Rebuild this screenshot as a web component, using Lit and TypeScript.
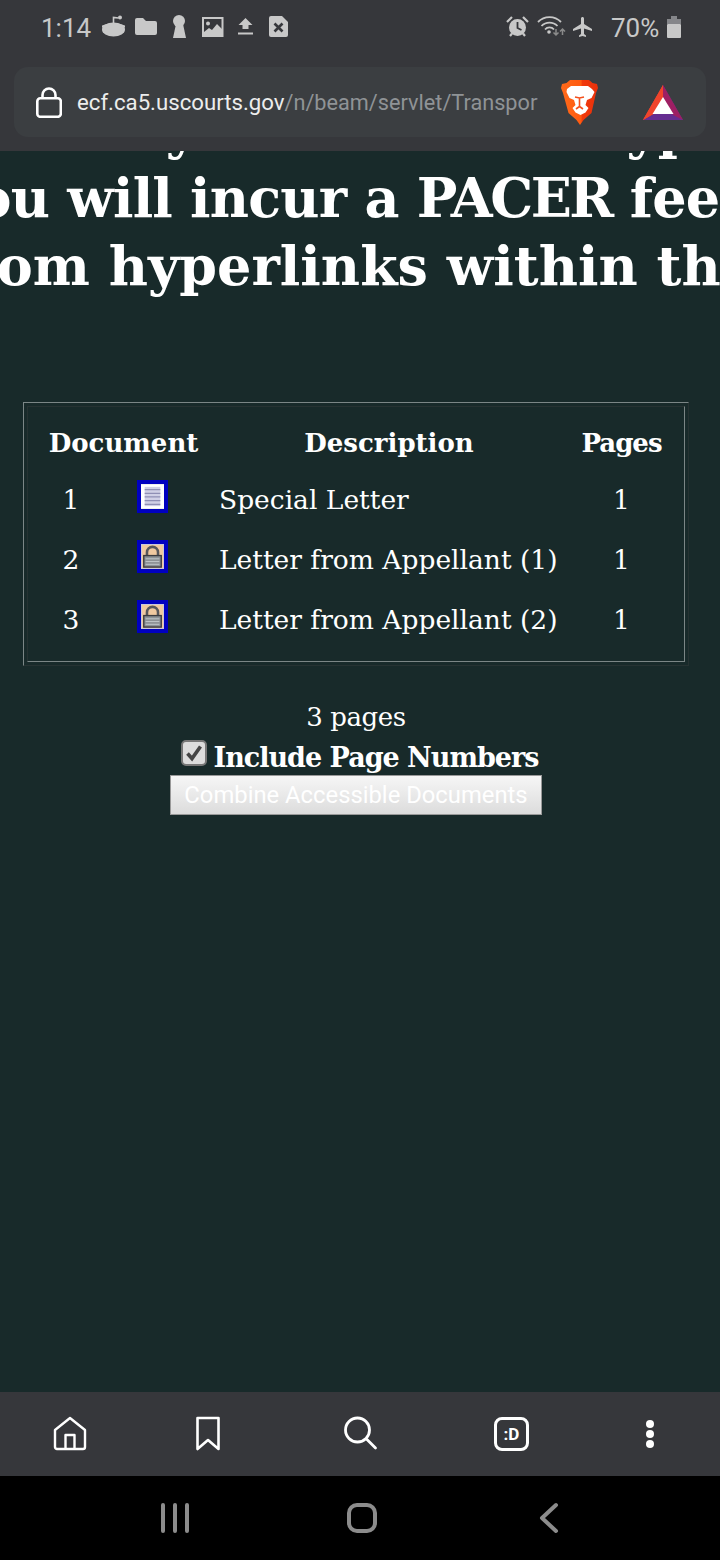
import { LitElement, html, css, svg } from 'lit';
import { customElement } from 'lit/decorators.js';

const rows = [
  { n: 1, title: 'Special Letter', locked: false },
  { n: 2, title: 'Letter from Appellant (1)', locked: true },
  { n: 3, title: 'Letter from Appellant (2)', locked: true },
];

const docIcon = svg`
  <rect width="25" height="27" fill="#fff"/>
  <rect x="4" y="3" width="17" height="21" fill="#d0d0e6"/>
  <path d="M4 6h17M4 10h17M4 14h17M4 18h17M4 22h17" stroke="#8f8fb5" stroke-width="1.300"/>`;

const lockIcon = svg`
  <rect width="25" height="27" fill="#f0c9a0"/>
  <rect width="25" height="27" fill="none" stroke="#c8c8dc" stroke-width="2"/>
  <path d="M6.500 14V9a6 6 0 0 1 12 0v5" fill="none" stroke="#57575b" stroke-width="2.800"/>
  <rect x="3" y="12.500" width="19" height="12.500" fill="#8d9296" stroke="#3c3c40" stroke-width="1.500"/>
  <path d="M5 16h15M5 19h15M5 22h15" stroke="#c4cbcd" stroke-width="1"/>`;

@customElement('app-root')
export class AppRoot extends LitElement {
  static styles = css`
    :host {
      display: flex;
      flex-direction: column;
      width: 720px;
      height: 1560px;
      overflow: hidden;
      background: #182a2a;
      font-family: 'DejaVu Serif', serif;
      color: #fff;
    }
    svg { display: block; flex: none; }

    .top { height: 151px; flex: none; background: #36373b; box-sizing: border-box; padding: 0 14px; }
    .status { height: 67px; display: flex; align-items: flex-start; font-family: Roboto, sans-serif; color: #c8c8c8; font-size: 26px; }
    .status svg { margin-top: 10px; }
    .time { width: 57px; margin-left: 27px; line-height: 56px; }
    .status-right { margin-left: 213px; }
    .pct { margin-left: 16px; line-height: 56px; width: 55px; }
    .urlbar { height: 70px; background: #3b3e41; border-radius: 14px; display: flex; align-items: center; padding-left: 22px; }
    .url { width: 461px; margin-left: 15px; overflow: hidden; white-space: nowrap; font: 21.700px Roboto, sans-serif; color: #8f9396; }
    .url b { font-weight: 400; font-size: 22.200px; color: #eceded; }
    .brave { margin-left: 23px; }
    .bat { margin-left: 45px; }

    main { flex: 1; min-height: 0; overflow: hidden; }
    .headline { font-weight: 700; font-size: 54px; line-height: 68px; white-space: nowrap; height: 243px; margin-top: -56px; }
    .l1 { margin-left: -232px; margin-bottom: 2px; }
    .l2 { margin-left: -55px; letter-spacing: -0.8px; line-height: 67px; }
    .l2 span { letter-spacing: -2.500px; }
    .l3 { margin-left: -55px; }

    .doc-box {
      width: 666px;
      height: 264px;
      box-sizing: border-box;
      margin: 64px 0 0 23px;
      border: 1px solid;
      border-color: #7b8686 #263232 #263232 #7b8686;
      padding: 3px;
    }
    .doc-inner { height: 100%; box-sizing: border-box; border: 1px solid; border-color: #263232 #7b8686 #7b8686 #263232; }
    table { border-collapse: collapse; width: 656px; table-layout: fixed; font-size: 26.500px; }
    col.c1 { width: 86px; }
    col.c2 { width: 105px; }
    col.c3 { width: 340px; }
    col.c4 { width: 125px; }
    th, td { padding: 0; text-align: center; height: 60px; font-weight: 400; }
    th { font-weight: 700; height: 52px; font-size: 26px; padding-top: 10px; }
    th:last-child { letter-spacing: -1px; }
    td.title { text-align: left; }
    .icon { display: block; width: 23px; height: 25px; border: 4px solid #0000c0; margin: 0 0 6px 23px; }

    .summary { width: 712px; display: flex; flex-direction: column; align-items: center; margin-top: 31px; }
    .pages { font-size: 26px; line-height: 40px; letter-spacing: -0.4px; }
    .include { display: flex; align-items: center; gap: 7px; margin-left: 7px; padding: 5px 0 1px; font-size: 27px; font-weight: 700; line-height: 32px; letter-spacing: -1px; }
    .check { width: 26px; height: 26px; box-sizing: border-box; background: #dcdcdc; border: 2px solid #777; border-radius: 5px; margin-top: -10px; }
    .combine {
      width: 372px;
      height: 40px;
      padding: 0;
      box-sizing: border-box;
      border: 1px solid #999;
      background: linear-gradient(#f6f6f6, #dcdcdc);
      color: #fff;
      font: 23.800px Roboto, sans-serif;
      white-space: nowrap;
    }

    .toolbar { height: 84px; flex: none; background: #36373b; display: flex; align-items: center; padding-left: 52px; gap: 102px; }
    .find { margin: 0 14px; }
    .more { margin-left: 1px; }
    .tab { width: 35px; height: 34px; box-sizing: border-box; border: 3px solid #fff; border-radius: 8px; display: flex; align-items: center; justify-content: center; font: 700 17px Roboto, sans-serif; }
    .nav { height: 84px; flex: none; background: #000; display: flex; align-items: center; padding-left: 159px; gap: 155px; }
  `;

  private statusLeft() {
    return html`<svg width="194" height="36" viewBox="98 10 194 36" fill="#c8c8c8">
      <ellipse cx="113.500" cy="29.500" rx="11.500" ry="7"/>
      <path d="M102 25.500q11.500-5 23 0v2h-23z" fill="#c8c8c8"/>
      <path d="M113.500 24v-6.500l5 .5" fill="none" stroke="#c8c8c8" stroke-width="1.600"/>
      <circle cx="120" cy="17.500" r="2"/>
      <path d="M135 20a2 2 0 0 1 2-2h6l3 3h9a2 2 0 0 1 2 2v10a2 2 0 0 1-2 2h-18a2 2 0 0 1-2-2z"/>
      <circle cx="179" cy="21" r="6"/>
      <path d="M176 24 173 38h13l-3-14z"/>
      <rect x="203" y="18" width="19.500" height="18" fill="none" stroke="#c8c8c8" stroke-width="2"/>
      <circle cx="208" cy="23.500" r="2"/>
      <path d="M204 35v-3l5-4 3 2 5-6 5 5v6z"/>
      <path d="M245.500 18l7 7h-4v4h-6v-4h-4z"/>
      <rect x="238" y="32.500" width="15" height="2"/>
      <path d="M271 16h11l6 6v13a2 2 0 0 1-2 2h-15a2 2 0 0 1-2-2V18a2 2 0 0 1 2-2z"/>
      <path d="M274.500 23.500l8 8M282.500 23.500l-8 8" stroke="#36373b" stroke-width="2.600"/>
    </svg>`;
  }

  private statusRight() {
    return html`<svg class="status-right" width="90" height="36" viewBox="505 10 90 36" fill="#c8c8c8">
      <circle cx="517.500" cy="27.500" r="8.500"/>
      <path d="M517.500 22v6l4 2" fill="none" stroke="#36373b" stroke-width="1.800"/>
      <path d="M507 22l5-5M523 17l5 5M510 36l2-2.500M525 36l-2-2.500" stroke="#c8c8c8" stroke-width="2.200" fill="none"/>
      <g fill="none" stroke="#c8c8c8" stroke-width="1.800">
        <path d="M538 22a16 16 0 0 1 23 0"/>
        <path d="M541.500 26a11 11 0 0 1 16 0"/>
        <path d="M545 29.500a6 6 0 0 1 9 0"/>
      </g>
      <circle cx="549" cy="32" r="1.800"/>
      <path d="M556 29v6m-2.500-2.500 2.500 2.500 2.500-2.500M562.500 35v-6m-2.500 2.500 2.500-2.500 2.500 2.500" fill="none" stroke="#8a8a8a" stroke-width="1.500"/>
      <svg x="571" y="14.500" width="24" height="25" viewBox="0 0 24 24"><path d="M21 16v-2l-8-5V3.500c0-.83-.67-1.500-1.500-1.500S10 2.670 10 3.500V9l-8 5v2l8-2.500V19l-2 1.500V22l3.500-1 3.500 1v-1.500L13 19v-5.500l8 2.500z"/></svg>
    </svg>`;
  }

  private brave() {
    return html`<svg class="brave" width="37" height="46" viewBox="0 0 37 46">
      <defs><linearGradient id="bg" x1="0" x2="1"><stop offset="0" stop-color="#ff6a1a"/><stop offset=".55" stop-color="#ff5a10"/><stop offset=".56" stop-color="#f23a0c"/><stop offset="1" stop-color="#e8300a"/></linearGradient></defs>
      <path d="M9 1h19l3.500 3 4.500 1 1 4-2 5-4.500 20-8 7-3.500 5-3.500-5-8-7L2 14 0 9l1-4 4.500-1z" fill="url(#bg)"/>
      <path d="M10 7h17l4 3 2.500 3-3 6-4.500 2-1.500 5 3 3-3 4.500-5 2.500-5-2.500-3-4.500 3-3-1.500-5-4.500-2-3-6L6 10z" fill="#fff"/>
      <path d="M14 18l4.500 1 4.500-1M18.500 19v8.500l-3.500 2.500M18.500 27.500l3.500 2.500" fill="none" stroke="#f4511e" stroke-width="1.600"/>
    </svg>`;
  }

  private bat() {
    return html`<svg class="bat" width="40" height="35" viewBox="0 0 40 35">
      <path d="M20 0 0 35h40z" fill="#662d91"/>
      <path d="M20 0 0 35l9.500-5.500L20 11z" fill="#ff5000"/>
      <path d="M20 0 0 35 12 28 20 14z" fill="#f0442c"/>
      <path d="M20 0v14l10 16 10 5z" fill="#9e1f63"/>
      <path d="M20 12 9.500 29h21z" fill="#fff"/>
    </svg>`;
  }

  render() {
    return html`
      <header class="top">
        <div class="status">
          <span class="time">1:14</span>
          ${this.statusLeft()}
          ${this.statusRight()}
          <span class="pct">70%</span>
          <svg width="16" height="36" viewBox="666 10 16 36">
            <path d="M671 16h6v3h4v5h-14v-5h4z" fill="#85868a"/>
            <rect x="667" y="24" width="14" height="14" rx="1" fill="#c8c8c8"/>
          </svg>
        </div>
        <div class="urlbar">
          <svg width="26" height="31" viewBox="0 0 26 31" fill="none" stroke="#fff" stroke-width="2.600">
            <rect x="1.300" y="11.300" width="23.500" height="18.500" rx="3"/>
            <path d="M6.500 11V8a6.500 6.500 0 0 1 13 0v3"/>
          </svg>
          <div class="url"><b>ecf.ca5.uscourts.gov</b>/n/beam/servlet/TransportRoom</div>
          ${this.brave()}
          ${this.bat()}
        </div>
      </header>

      <main>
        <div class="headline">
          <div class="l1">Documents by the selected type</div>
          <div class="l2">you will incur a <span>PACER</span> fee</div>
          <div class="l3">from hyperlinks within the</div>
        </div>

        <div class="doc-box">
          <div class="doc-inner">
            <table>
              <colgroup><col class="c1"><col class="c2"><col class="c3"><col class="c4"></colgroup>
              <thead>
                <tr><th colspan="2">Document</th><th>Description</th><th>Pages</th></tr>
              </thead>
              <tbody>
                ${rows.map(r => html`
                  <tr>
                    <td>${r.n}</td>
                    <td><svg class="icon" viewBox="0 0 25 27">${r.locked ? lockIcon : docIcon}</svg></td>
                    <td class="title">${r.title}</td>
                    <td>1</td>
                  </tr>`)}
              </tbody>
            </table>
          </div>
        </div>

        <div class="summary">
          <div class="pages">3 pages</div>
          <div class="include">
            <div class="check">
              <svg width="22" height="22" viewBox="0 0 22 22"><path d="M4.500 11.500l4.500 5 8.500-12" fill="none" stroke="#444" stroke-width="3.600"/></svg>
            </div>
            <span>Include Page Numbers</span>
          </div>
          <button class="combine">Combine Accessible Documents</button>
        </div>
      </main>

      <div class="toolbar">
        <svg width="36" height="36" viewBox="0 0 36 36" fill="none" stroke="#fff" stroke-width="2.400" stroke-linejoin="round">
          <path d="M3 14 18 2l15 12v17a2 2 0 0 1-2 2H5a2 2 0 0 1-2-2z"/>
          <path d="M13.500 33V19h9v14"/>
        </svg>
        <svg width="36" height="36" viewBox="0 0 36 36" fill="none" stroke="#fff" stroke-width="2.600" stroke-linejoin="round">
          <path d="M7.500 2h21v31L18 24 7.500 33z"/>
        </svg>
        <svg class="find" width="36" height="36" viewBox="0 0 36 36" fill="none" stroke="#fff" stroke-width="2.800" stroke-linecap="round">
          <circle cx="15.500" cy="14" r="12"/>
          <path d="M25 23.500 33.500 32"/>
        </svg>
        <div class="tab">:D</div>
        <svg class="more" width="36" height="36" viewBox="0 0 36 36" fill="#fff">
          <circle cx="18" cy="8" r="4"/><circle cx="18" cy="18" r="4"/><circle cx="18" cy="28" r="4"/>
        </svg>
      </div>

      <div class="nav">
        <svg width="32" height="32" viewBox="0 0 32 32" stroke="#8c8c8c" stroke-width="4" stroke-linecap="round">
          <path d="M4 3v26M16 3v26M28 3v26"/>
        </svg>
        <svg width="32" height="32" viewBox="0 0 32 32" fill="none" stroke="#8c8c8c" stroke-width="4">
          <rect x="3" y="3" width="26" height="26" rx="8"/>
        </svg>
        <svg width="32" height="32" viewBox="0 0 32 32" fill="none" stroke="#8c8c8c" stroke-width="4" stroke-linecap="round" stroke-linejoin="round">
          <path d="M23 3 9 16l14 13"/>
        </svg>
      </div>
    `;
  }
}
